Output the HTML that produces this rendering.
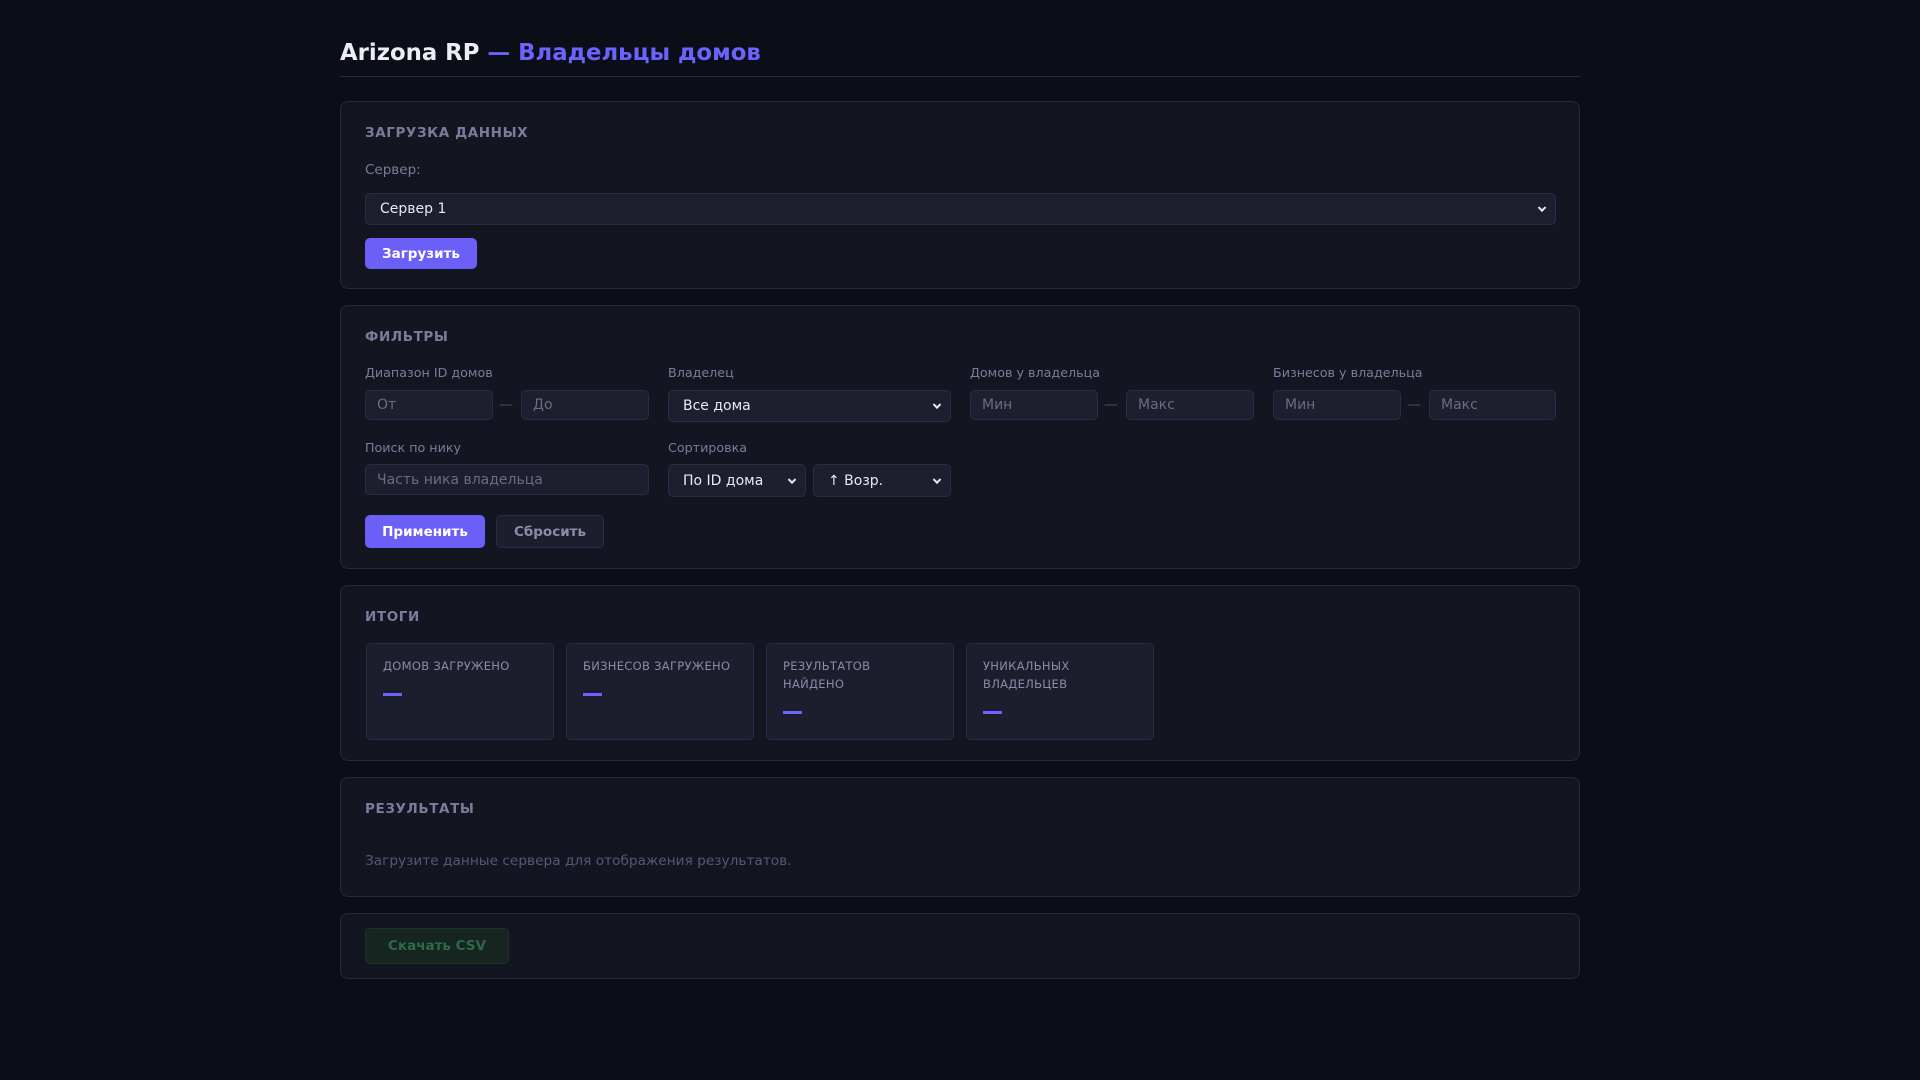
<!DOCTYPE html>
<html><head><meta charset="utf-8"><style>
*{box-sizing:border-box;margin:0;padding:0}
body{width:1920px;height:1080px;background:#0c0e17;font-family:"DejaVu Sans","Liberation Sans",sans-serif;color:#d8dae8;position:relative;overflow:hidden}
.a{position:absolute}
h1{position:absolute;left:340px;top:38px;font-size:22.8px;font-weight:bold;color:#eceef6;line-height:30px}
h1 span{color:#6c63ff}
.hr{left:340px;top:76px;width:1240px;height:1px;background:#262842}
.card{position:absolute;left:340px;width:1240px;background:#131520;border:1px solid #262840;border-radius:8px}
.h{position:absolute;left:24px;font-size:13.5px;font-weight:bold;letter-spacing:0.6px;color:#7b7c9c;line-height:18px}
.lbl{font-size:12.7px;color:#7b7c9c;line-height:16px}
.in{background:#1d1f2e;border:1px solid #2a2c46;border-radius:5px;font-size:14px;color:#6a6c84;padding-left:11px;display:flex;align-items:center}
.sel{background:#1d1f2e;border:1px solid #2a2c46;border-radius:5px;font-size:14px;color:#e8e9f2;padding-left:14px;display:flex;align-items:center}
.sel:after{content:"";position:absolute;right:10px;top:50%;width:4px;height:4px;border-right:2px solid #e8e9f2;border-bottom:2px solid #e8e9f2;transform:translateY(-70%) rotate(45deg)}
.btn{background:#6c5ff8;border-radius:5px;color:#fff;font-weight:bold;font-size:13.5px;display:flex;align-items:center;justify-content:center}
.dash{font-size:14px;color:#4a4c66}
.stat{position:absolute;top:57px;width:188px;height:97px;background:#1c1e2e;border:1px solid #292b44;border-radius:5px;padding:13px 16px}
.stat .t{font-size:11.5px;color:#8a8ca8;letter-spacing:.3px;line-height:18px;white-space:nowrap}
.stat .v{width:19px;height:3px;background:#6c63ff;margin-top:18px}
</style></head><body>
<h1>Arizona RP <span>— Владельцы домов</span></h1>
<div class="a hr"></div>

<div class="card" style="top:101px;height:188px">
<div class="h" style="top:22px">ЗАГРУЗКА ДАННЫХ</div>
<div class="a lbl" style="left:24px;top:60px;font-size:13.5px">Сервер:</div>
<div class="a sel" style="left:24px;top:91px;width:1191px;height:32px">Сервер 1</div>
<div class="a btn" style="left:24px;top:136px;width:112px;height:31px">Загрузить</div>
</div>

<div class="card" style="top:305px;height:264px">
<div class="h" style="top:22px">ФИЛЬТРЫ</div>
<div class="a lbl" style="left:24px;top:59px">Диапазон ID домов</div>
<div class="a in" style="left:24px;top:84px;width:128px;height:30px">От</div>
<div class="a dash" style="left:158px;top:91px">—</div>
<div class="a in" style="left:180px;top:84px;width:128px;height:30px">До</div>
<div class="a lbl" style="left:327px;top:59px">Владелец</div>
<div class="a sel" style="left:327px;top:84px;width:283px;height:32px">Все дома</div>
<div class="a lbl" style="left:629px;top:59px">Домов у владельца</div>
<div class="a in" style="left:629px;top:84px;width:128px;height:30px">Мин</div>
<div class="a dash" style="left:763px;top:91px">—</div>
<div class="a in" style="left:785px;top:84px;width:128px;height:30px">Макс</div>
<div class="a lbl" style="left:932px;top:59px">Бизнесов у владельца</div>
<div class="a in" style="left:932px;top:84px;width:128px;height:30px">Мин</div>
<div class="a dash" style="left:1066px;top:91px">—</div>
<div class="a in" style="left:1088px;top:84px;width:127px;height:30px">Макс</div>
<div class="a lbl" style="left:24px;top:134px">Поиск по нику</div>
<div class="a in" style="left:24px;top:158px;width:284px;height:31px">Часть ника владельца</div>
<div class="a lbl" style="left:327px;top:134px">Сортировка</div>
<div class="a sel" style="left:327px;top:158px;width:138px;height:33px">По ID дома</div>
<div class="a sel" style="left:472px;top:158px;width:138px;height:33px">↑ Возр.</div>
<div class="a btn" style="left:24px;top:209px;width:120px;height:33px">Применить</div>
<div class="a btn" style="left:155px;top:209px;width:108px;height:33px;background:#1c1e2e;border:1px solid #2a2c46;color:#8a8ca8">Сбросить</div>
</div>

<div class="card" style="top:585px;height:176px">
<div class="h" style="top:22px">ИТОГИ</div>
<div class="stat" style="left:25px"><div class="t">ДОМОВ ЗАГРУЖЕНО</div><div class="v"></div></div>
<div class="stat" style="left:225px"><div class="t">БИЗНЕСОВ ЗАГРУЖЕНО</div><div class="v"></div></div>
<div class="stat" style="left:425px"><div class="t">РЕЗУЛЬТАТОВ<br>НАЙДЕНО</div><div class="v"></div></div>
<div class="stat" style="left:625px"><div class="t">УНИКАЛЬНЫХ<br>ВЛАДЕЛЬЦЕВ</div><div class="v"></div></div>
</div>

<div class="card" style="top:777px;height:120px">
<div class="h" style="top:22px">РЕЗУЛЬТАТЫ</div>
<div class="a" style="left:24px;top:75px;font-size:13.7px;color:#55577a">Загрузите данные сервера для отображения результатов.</div>
</div>

<div class="card" style="top:913px;height:66px">
<div class="a btn" style="left:24px;top:14px;width:144px;height:36px;background:#16251f;border:1px solid #1d3329;color:#2c6a48">Скачать CSV</div>
</div>
</body></html>
